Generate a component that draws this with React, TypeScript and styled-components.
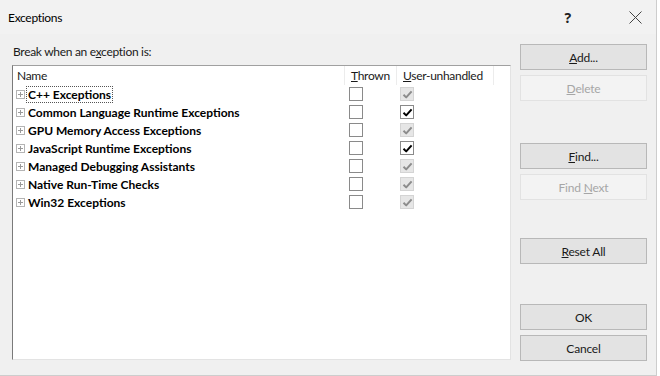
import React from "react";
import styled, { createGlobalStyle } from "styled-components";

const GlobalStyle = createGlobalStyle`
  html, body {
    margin: 0;
    padding: 0;
    background: #ffffff;
  }
  body {
    font-family: Lato, "Segoe UI", sans-serif;
    font-size: 12px;
    letter-spacing: -0.3px;
    color: #000;
  }
`;

type ExceptionGroup = {
  name: string;
  userEnabled: boolean;
  focused?: boolean;
};

const groups: ExceptionGroup[] = [
  { name: "C++ Exceptions", userEnabled: false, focused: true },
  { name: "Common Language Runtime Exceptions", userEnabled: true },
  { name: "GPU Memory Access Exceptions", userEnabled: false },
  { name: "JavaScript Runtime Exceptions", userEnabled: true },
  { name: "Managed Debugging Assistants", userEnabled: false },
  { name: "Native Run-Time Checks", userEnabled: false },
  { name: "Win32 Exceptions", userEnabled: false },
];

const Check = ({ $dim }: { $dim?: boolean }) => (
  <svg width="11" height="11" viewBox="0 0 11 11">
    <path
      d="M1.5 5.8 L4.2 8.4 L9.6 2.4"
      fill="none"
      stroke={$dim ? "#8c8c8c" : "#000"}
      strokeWidth="2"
      strokeLinejoin="round"
    />
  </svg>
);

const App = () => {
  return (
    <>
      <GlobalStyle />
      <Window>
        <TitleBar>
          <Title>Exceptions</Title>
          <Help>?</Help>
          <Close>
            <svg width="13" height="13" viewBox="0 0 13 13">
              <path d="M0.5 0.5 L12.5 12.5 M12.5 0.5 L0.5 12.5" stroke="#444" strokeWidth="1" />
            </svg>
          </Close>
        </TitleBar>

        <Body>
          <LeftCol>
            <Label>
              Break when an e<u>x</u>ception is:
            </Label>
            <ListBox>
              <HeaderRow>
                <HeaderCell $pad={4}>Name</HeaderCell>
                <HeaderCell $pad={6}>
                  <u>T</u>hrown
                </HeaderCell>
                <HeaderCell $pad={6}>
                  <u>U</u>ser-unhandled
                </HeaderCell>
                <HeaderCell $pad={0} />
              </HeaderRow>
              {groups.map((g) => (
                <Row key={g.name}>
                  <NameCell>
                    <Expander />
                    <GroupName $focused={g.focused}>{g.name}</GroupName>
                  </NameCell>
                  <BoxCell $pad={4}>
                    <CheckBox />
                  </BoxCell>
                  <BoxCell $pad={3}>
                    <CheckBox $disabled={!g.userEnabled}>
                      <Check $dim={!g.userEnabled} />
                    </CheckBox>
                  </BoxCell>
                  <span />
                </Row>
              ))}
            </ListBox>
          </LeftCol>

          <RightCol>
            <Button $gap={0}>
              <u>A</u>dd...
            </Button>
            <Button $gap={5} disabled>
              <u>D</u>elete
            </Button>
            <Button $gap={42}>
              <u>F</u>ind...
            </Button>
            <Button $gap={5} disabled>
              Find <u>N</u>ext
            </Button>
            <Button $gap={38}>
              <u>R</u>eset All
            </Button>
            <Button $gap={40}>OK</Button>
            <Button $gap={5}>Cancel</Button>
          </RightCol>
        </Body>
      </Window>
    </>
  );
};

const Window = styled.div`
  width: 656px;
  height: 375px;
  background: #f0f0f0;
  border-right: 1px solid #cdcdcd;
  border-bottom: 1px solid #cdcdcd;
  display: flex;
  flex-direction: column;
`;

const TitleBar = styled.div`
  height: 34px;
  display: flex;
  align-items: center;
  padding: 0 14px 0 8px;
  background: #f2f2f2;
`;

const Title = styled.span`
  color: #000;
`;

const Help = styled.span`
  margin-left: auto;
  margin-right: 58px;
  font-family: "Noto Sans", sans-serif;
  font-weight: 700;
  font-size: 14px;
  color: #222;
`;

const Close = styled.span`
  display: flex;
  width: 13px;
  height: 13px;
`;

const Body = styled.div`
  flex: 1;
  display: flex;
  padding: 10px 0 0 12px;
`;

const LeftCol = styled.div`
  width: 499px;
  display: flex;
  flex-direction: column;
`;

const Label = styled.div`
  height: 16px;
  line-height: 16px;
  margin: 0 0 5px 1px;
  color: #1a1a1a;
`;

const ListBox = styled.div`
  height: 295px;
  box-sizing: border-box;
  background: #fff;
  border-top: 1px solid #a0a0a0;
  border-left: 1px solid #7a7a7a;
  border-right: 1px solid #e3e3e3;
  border-bottom: 1px solid #e3e3e3;
`;

const HeaderRow = styled.div`
  display: grid;
  grid-template-columns: 332px 52px 97px 1fr;
  height: 19px;
  line-height: 19px;
`;

const HeaderCell = styled.div<{ $pad: number }>`
  padding-left: ${(p) => p.$pad}px;
  border-right: 1px solid #ececec;
  color: #1a1a1a;
  white-space: nowrap;
  &:last-child {
    border-right: none;
  }
`;

const Row = styled.div`
  display: grid;
  grid-template-columns: 332px 52px 97px 1fr;
  height: 18px;
  align-items: center;
`;

const NameCell = styled.div`
  display: flex;
  align-items: center;
  padding-left: 3px;
  gap: 1px;
`;

const Expander = styled.span`
  position: relative;
  width: 9px;
  height: 9px;
  box-sizing: border-box;
  border: 1px solid #b4b4b4;
  flex: none;
  &::before,
  &::after {
    content: "";
    position: absolute;
    background: #9a9a9a;
  }
  &::before {
    left: 1px;
    right: 1px;
    top: 3px;
    height: 1px;
  }
  &::after {
    top: 1px;
    bottom: 1px;
    left: 3px;
    width: 1px;
  }
`;

const GroupName = styled.span<{ $focused?: boolean }>`
  font-weight: 700;
  letter-spacing: 0;
  line-height: 15px;
  padding: 0 1px;
  border: 1px dotted ${(p) => (p.$focused ? "#555" : "transparent")};
  white-space: nowrap;
`;

const BoxCell = styled.div<{ $pad: number }>`
  display: flex;
  padding-left: ${(p) => p.$pad}px;
`;

const CheckBox = styled.span<{ $disabled?: boolean }>`
  width: 14px;
  height: 14px;
  box-sizing: border-box;
  display: flex;
  align-items: center;
  justify-content: center;
  background: ${(p) => (p.$disabled ? "#e6e6e6" : "#fff")};
  border: 1px solid ${(p) => (p.$disabled ? "#d4d4d4" : "#8a8a8a")};
`;

const RightCol = styled.div`
  width: 127px;
  margin-left: 9px;
  display: flex;
  flex-direction: column;
`;

const Button = styled.button<{ $gap: number }>`
  height: 26px;
  margin-top: ${(p) => p.$gap}px;
  box-sizing: border-box;
  font-family: Lato, "Segoe UI", sans-serif;
  font-size: 12px;
  letter-spacing: -0.2px;
  color: #1a1a1a;
  background: #e3e3e3;
  border: 1px solid #b8b8b8;
  padding: 0;
  &:disabled {
    color: #a6a6a6;
    background: #f3f3f3;
    border-color: #e2e2e2;
  }
`;

export default App;
